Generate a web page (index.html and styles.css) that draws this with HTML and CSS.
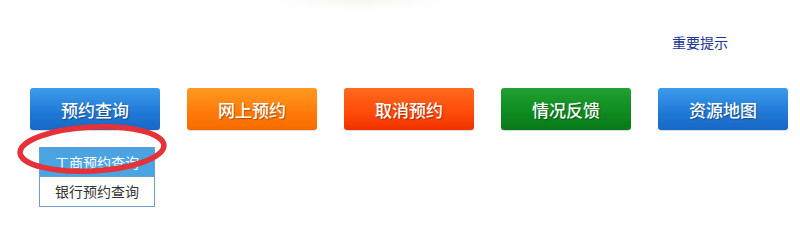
FILE: index.html
```html
<!DOCTYPE html>
<html lang="zh">
<head>
<meta charset="utf-8">
<title>预约</title>
<link rel="stylesheet" href="styles.css">
</head>
<body>
<div class="page">
  <div class="glow"></div>
  <div class="notice-row"><a class="notice" href="#">重要提示</a></div>
  <div class="nav">
    <div class="nav-item">
      <a class="btn blue" href="#">预约查询</a>
      <ul class="menu">
        <li class="active">工商预约查询</li>
        <li>银行预约查询</li>
      </ul>
      <svg class="ring" width="160" height="60" viewBox="0 0 160 60">
        <ellipse cx="80" cy="29" rx="72" ry="22" transform="rotate(-3 80 29)" fill="none" stroke="#e53138" stroke-width="5.5"/>
      </svg>
    </div>
    <div class="nav-item"><a class="btn orange" href="#">网上预约</a></div>
    <div class="nav-item"><a class="btn red" href="#">取消预约</a></div>
    <div class="nav-item"><a class="btn green" href="#">情况反馈</a></div>
    <div class="nav-item"><a class="btn blue" href="#">资源地图</a></div>
  </div>
</div>
</body>
</html>
```
FILE: styles.css
```css
html, body {
  margin: 0;
  padding: 0;
  background: #ffffff;
  font-family: "Noto Sans CJK SC", "Liberation Sans", sans-serif;
}
.page {
  width: 800px;
  height: 241px;
  overflow: hidden;
}
.glow {
  margin-left: 270px;
  width: 180px;
  height: 10px;
  background: radial-gradient(ellipse at 50% 0%, rgba(235, 225, 200, 0.3), rgba(255, 255, 255, 0) 70%);
}
.notice-row {
  height: 66px;
  display: flex;
  justify-content: flex-end;
  padding-right: 72px;
}
.notice {
  margin-top: 22px;
  font-size: 14px;
  line-height: 20px;
  color: #1a3594;
  text-decoration: none;
}
.nav {
  display: flex;
  gap: 27px;
  padding-left: 30px;
  margin-top: 12px;
}
.nav-item {
  position: relative;
}
.btn {
  display: flex;
  align-items: center;
  justify-content: center;
  width: 130px;
  height: 42px;
  border-radius: 3px;
  color: #ffffff;
  font-size: 17px;
  font-weight: 500;
  text-decoration: none;
  text-shadow: 1px 1px 1px rgba(0, 0, 0, 0.35);
  box-shadow: 0 1px 1px rgba(0, 0, 0, 0.15);
  box-sizing: border-box;
}
.blue {
  background: linear-gradient(#3c9ceb, #1f78d6 60%, #1a67c4);
}
.orange {
  background: linear-gradient(#ff9a20, #ff7a08 60%, #f56a00);
}
.red {
  background: linear-gradient(#ff6a20, #ff4a08 60%, #ee3000);
}
.green {
  background: linear-gradient(#22a032, #0e8a20 60%, #087818);
}
.menu {
  position: absolute;
  left: 9px;
  top: 59px;
  width: 114px;
  margin: 0;
  padding: 0;
  list-style: none;
  border: 1px solid #6c9dd0;
  background: #ffffff;
  z-index: 1;
}
.menu li {
  height: 29px;
  line-height: 29px;
  text-align: center;
  font-size: 14px;
  color: #333333;
}
.menu li.active {
  background: #4aa4e2;
  color: #ffffff;
  border-bottom: 1px solid #6c9dd0;
  height: 28px;
  line-height: 28px;
}
.ring {
  position: absolute;
  left: -18px;
  top: 32px;
  z-index: 2;
  pointer-events: none;
}
```
